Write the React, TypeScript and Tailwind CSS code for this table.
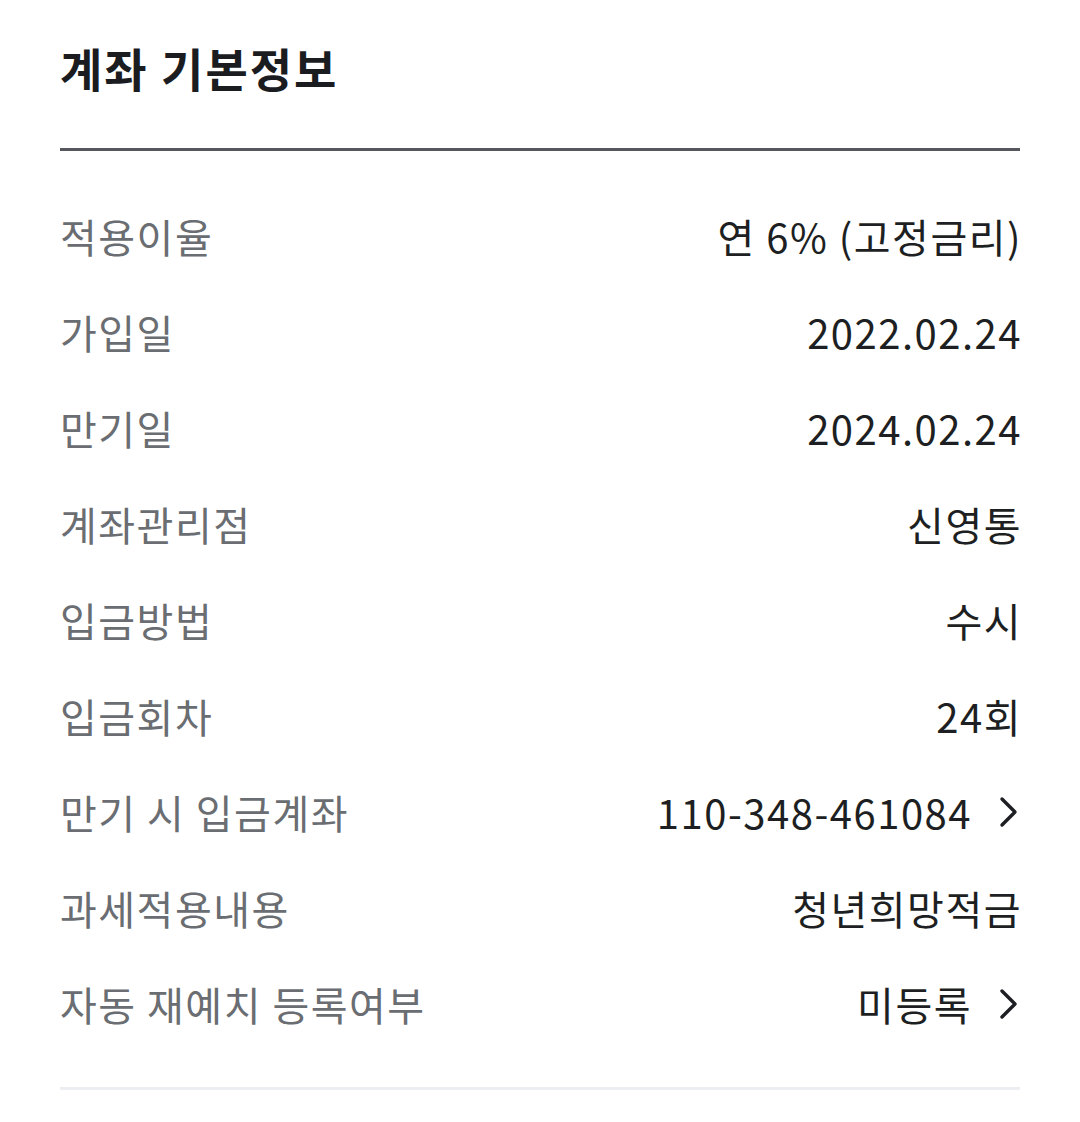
import React from 'react';

interface InfoRow {
  label: string;
  value: string;
  link?: boolean;
}

const rows: InfoRow[] = [
  { label: '적용이율', value: '연 6% (고정금리)' },
  { label: '가입일', value: '2022.02.24' },
  { label: '만기일', value: '2024.02.24' },
  { label: '계좌관리점', value: '신영통' },
  { label: '입금방법', value: '수시' },
  { label: '입금회차', value: '24회' },
  { label: '만기 시 입금계좌', value: '110-348-461084', link: true },
  { label: '과세적용내용', value: '청년희망적금' },
  { label: '자동 재예치 등록여부', value: '미등록', link: true },
];

function Chevron() {
  return (
    <svg width="22" height="38" viewBox="0 0 22 38" fill="none" className="ml-[26px]">
      <path d="M4 6 L17 19 L4 32" stroke="#1d1f22" strokeWidth="3.4" strokeLinecap="round" strokeLinejoin="round" />
    </svg>
  );
}

export default function App() {
  return (
    <div
      className="min-h-[1122px] w-[1080px] bg-white px-[60px] pt-[36px]"
      style={{ fontFamily: '"Noto Sans CJK KR", "Noto Sans", sans-serif' }}
    >
      <h2 className="h-[62px] text-[46px] font-bold leading-[62px] tracking-[2px] text-[#1a1c1f]">계좌 기본정보</h2>
      <div className="mt-[50px] h-[3px] bg-[#54585d]" />

      <div className="pt-[37px] pb-[35px]">
        {rows.map((row) => (
          <div key={row.label} className="flex h-[96px] items-center justify-between">
            <span className="text-[40px] tracking-[1.5px] text-[#6a6d71]">{row.label}</span>
            <div className="flex items-center">
              <span className={`text-[40px] tracking-[1.5px] text-[#1d1f22] ${row.link ? '' : '-mr-[2px]'}`}>
                {row.value}
              </span>
              {row.link && <Chevron />}
            </div>
          </div>
        ))}
      </div>

      <div className="h-[3px] bg-[#eceef1]" />
    </div>
  );
}
